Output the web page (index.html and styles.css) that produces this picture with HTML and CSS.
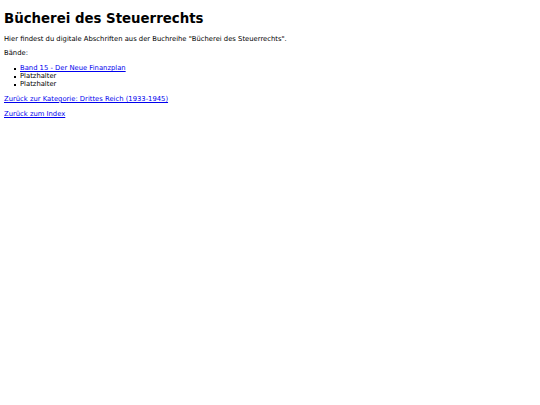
FILE: index.html
```html
<!DOCTYPE html>
<html lang="de">
<head>
<meta charset="utf-8">
<title>Bücherei des Steuerrechts</title>
<link rel="stylesheet" href="styles.css">
</head>
<body>
<h1 class="title">Bücherei des Steuerrechts</h1>
<p class="text">Hier findest du digitale Abschriften aus der Buchreihe "Bücherei des Steuerrechts".</p>
<p class="text">Bände:</p>
<ul class="list">
<li class="item"><a href="#">Band 15 - Der Neue Finanzplan</a></li>
<li class="item">Platzhalter</li>
<li class="item">Platzhalter</li>
</ul>
<p class="text"><a href="#">Zurück zur Kategorie: Drittes Reich (1933-1945)</a></p>
<p class="text"><a href="#">Zurück zum Index</a></p>
</body>
</html>
```
FILE: styles.css
```css
html { background: #fff; }
body {
  margin: 4px;
  font-family: "DejaVu Sans", Verdana, sans-serif;
  font-size: 6.8px;
  color: #000;
}
.title {
  font-size: 13.33px;
  font-weight: bold;
  margin: 7px 0 8.5px;
}
.text { margin: 6.8px 0; }
.list {
  margin: 6.8px 0;
  padding-left: 16px;
  list-style: none;
}
.item { position: relative; }
.item::before {
  content: "";
  position: absolute;
  left: -6.5px;
  top: 3.5px;
  width: 2px;
  height: 2px;
  background: #000;
}
a { color: #0000ee; }
```
